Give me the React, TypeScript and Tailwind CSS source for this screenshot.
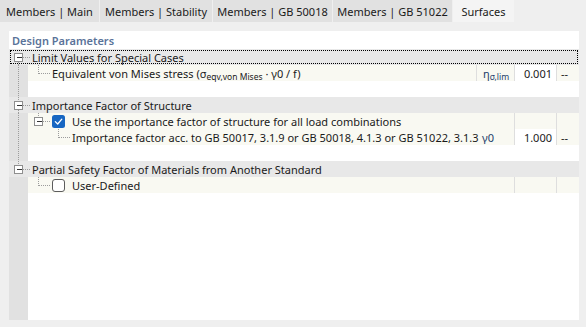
import React from "react";

const DOT = "#9c9c9c";

function VL({ x, y1, y2 }: { x: number; y1: number; y2: number }) {
  return (
    <line x1={x} x2={x} y1={y1} y2={y2} stroke={DOT} strokeWidth={1} strokeDasharray="1 1" shapeRendering="crispEdges" />
  );
}
function HL({ x1, x2 }: { x1: number; x2: number }) {
  return (
    <line x1={x1} x2={x2} y1={8.5} y2={8.5} stroke={DOT} strokeWidth={1} strokeDasharray="1 1" shapeRendering="crispEdges" />
  );
}
function Exp({ cx }: { cx: number }) {
  const x = cx - 4;
  return (
    <g shapeRendering="crispEdges">
      <rect x={x} y={4.5} width={8} height={8} fill="#ffffff" stroke="#8e8e8e" />
      <line x1={x + 2} x2={x + 7} y1={8.5} y2={8.5} stroke="#333333" />
    </g>
  );
}
function Check({ checked }: { checked: boolean }) {
  if (checked)
    return (
      <g>
        <rect x={43} y={2} width={13} height={13} rx={2.5} fill="#1766c2" />
        <path d="M46.3 8.6 L48.7 11 L52.8 6.2" fill="none" stroke="#ffffff" strokeWidth={1.3} strokeLinecap="round" strokeLinejoin="round" />
      </g>
    );
  return <rect x={43.5} y={2.5} width={12} height={12} rx={2.5} fill="#ffffff" stroke="#5c5c5c" />;
}

function Gutter({ w, strip, children }: { w: number; strip?: boolean; children?: React.ReactNode }) {
  return (
    <svg width={w} height={16} className="block shrink-0">
      {strip && <rect x={0} y={0} width={19} height={16} fill="#e1e1e1" />}
      {children}
    </svg>
  );
}

function Cols({ sym, val, unit, symBorder }: { sym?: React.ReactNode; val?: string; unit?: string; symBorder?: boolean }) {
  return (
    <>
      <div className={"w-[38px] h-4 shrink-0 flex items-center pl-[6px] " + (symBorder ? "border-l border-[#dedede]" : "")}>{sym}</div>
      <div className={"w-[42px] h-4 shrink-0 flex items-center justify-end pr-[4px] border-l border-[#dedede] " + (val ? "bg-white" : "")}>{val}</div>
      <div className="w-[23px] h-4 shrink-0 flex items-center pl-[4px] border-l border-[#dedede]">{unit}</div>
    </>
  );
}

export default function App() {
  const tabs = [
    { t: "Members | Main", w: "w-[99px]" },
    { t: "Members | Stability", w: "w-[112px]" },
    { t: "Members | GB 50018", w: "w-[119px]" },
    { t: "Members | GB 51022", w: "w-[119px]" },
  ];
  return (
    <div className="w-[586px] h-[327px] bg-[#efefef] overflow-hidden font-['Noto_Sans','Open_Sans',sans-serif] text-[11px] text-[#1a1a1a] leading-none flex flex-col">
      <div className="flex h-[22px] shrink-0 gap-[1px]">
        {tabs.map((x) => (
          <div key={x.t} className={x.w + " shrink-0 h-full bg-[#e1e1e1] flex items-center justify-center whitespace-nowrap"}>
            {x.t}
          </div>
        ))}
        <div className="w-[61px] shrink-0 h-full bg-[#f4f4f4] flex items-center justify-center">Surfaces</div>
      </div>
      <div className="flex-1 min-h-0 pt-[9px] pl-[9px] pr-[7px] pb-[7px] flex">
        <div className="flex-1 min-w-0 overflow-hidden bg-white flex flex-col">
          <div className="h-[18px] shrink-0 flex items-center pl-[3px] font-semibold text-[#5a7399]">Design Parameters</div>

          {/* Limit values */}
          <div className="h-4 shrink-0 flex items-center bg-[#e8e8e8] outline-1 outline-dotted outline-black -outline-offset-2">
            <Gutter w={23}>
              <Exp cx={9.5} />
              <VL x={9.5} y1={13} y2={16} />
              <HL x1={14} x2={22} />
            </Gutter>
            <span className="whitespace-nowrap">Limit Values for Special Cases</span>
          </div>
          <div className="h-4 shrink-0 flex items-center bg-[#f9f9f2]">
            <Gutter w={43} strip>
              <VL x={9.5} y1={0} y2={16} />
              <VL x={29.5} y1={0} y2={9} />
              <HL x1={30} x2={42} />
            </Gutter>
            <div className="flex-1 min-w-0 whitespace-nowrap">
              Equivalent von Mises stress (σ<sub className="text-[8.5px] align-baseline relative top-[2px]">eqv,von Mises</sub> · γ0 / f)
            </div>
            <Cols
              symBorder
              sym={
                <span className="text-[#24406b] whitespace-nowrap">
                  η<sub className="text-[8.5px] align-baseline relative top-[2px]">σ,lim</sub>
                </span>
              }
              val="0.001"
              unit="--"
            />
          </div>
          <div className="h-4 shrink-0 flex">
            <Gutter w={19} strip>
              <VL x={9.5} y1={0} y2={16} />
            </Gutter>
          </div>

          {/* Importance factor */}
          <div className="h-4 shrink-0 flex items-center bg-[#e8e8e8]">
            <Gutter w={23}>
              <VL x={9.5} y1={0} y2={4} />
              <Exp cx={9.5} />
              <VL x={9.5} y1={13} y2={16} />
              <HL x1={14} x2={22} />
            </Gutter>
            <span className="whitespace-nowrap">Importance Factor of Structure</span>
          </div>
          <div className="h-4 shrink-0 flex items-center bg-[#f9f9f2]">
            <Gutter w={63} strip>
              <VL x={9.5} y1={0} y2={16} />
              <VL x={29.5} y1={0} y2={4} />
              <Exp cx={29.5} />
              <HL x1={34} x2={42} />
              <Check checked />
            </Gutter>
            <div className="flex-1 min-w-0 whitespace-nowrap">Use the importance factor of structure for all load combinations</div>
            <Cols />
          </div>
          <div className="h-4 shrink-0 flex items-center bg-[#f9f9f2]">
            <Gutter w={63} strip>
              <VL x={9.5} y1={0} y2={16} />
              <VL x={49.5} y1={0} y2={9} />
              <HL x1={50} x2={62} />
            </Gutter>
            <div className="flex-1 min-w-0 whitespace-nowrap">
              Importance factor acc. to GB 50017, 3.1.9 or GB 50018, 4.1.3 or GB 51022, 3.1.3
            </div>
            <Cols sym={<span className="text-[#24406b]">γ0</span>} val="1.000" unit="--" />
          </div>
          <div className="h-4 shrink-0 flex">
            <Gutter w={19} strip>
              <VL x={9.5} y1={0} y2={16} />
            </Gutter>
          </div>

          {/* Partial safety */}
          <div className="h-4 shrink-0 flex items-center bg-[#e8e8e8]">
            <Gutter w={23}>
              <VL x={9.5} y1={0} y2={4} />
              <Exp cx={9.5} />
              <HL x1={14} x2={22} />
            </Gutter>
            <span className="whitespace-nowrap">Partial Safety Factor of Materials from Another Standard</span>
          </div>
          <div className="h-4 shrink-0 flex items-center bg-[#f9f9f2]">
            <Gutter w={63} strip>
              <VL x={29.5} y1={0} y2={9} />
              <HL x1={30} x2={42} />
              <Check checked={false} />
            </Gutter>
            <div className="flex-1 min-w-0 whitespace-nowrap">User-Defined</div>
            <Cols />
          </div>

          <div className="flex-1 flex">
            <div className="w-[19px] bg-[#e1e1e1]" />
          </div>
        </div>
      </div>
    </div>
  );
}
